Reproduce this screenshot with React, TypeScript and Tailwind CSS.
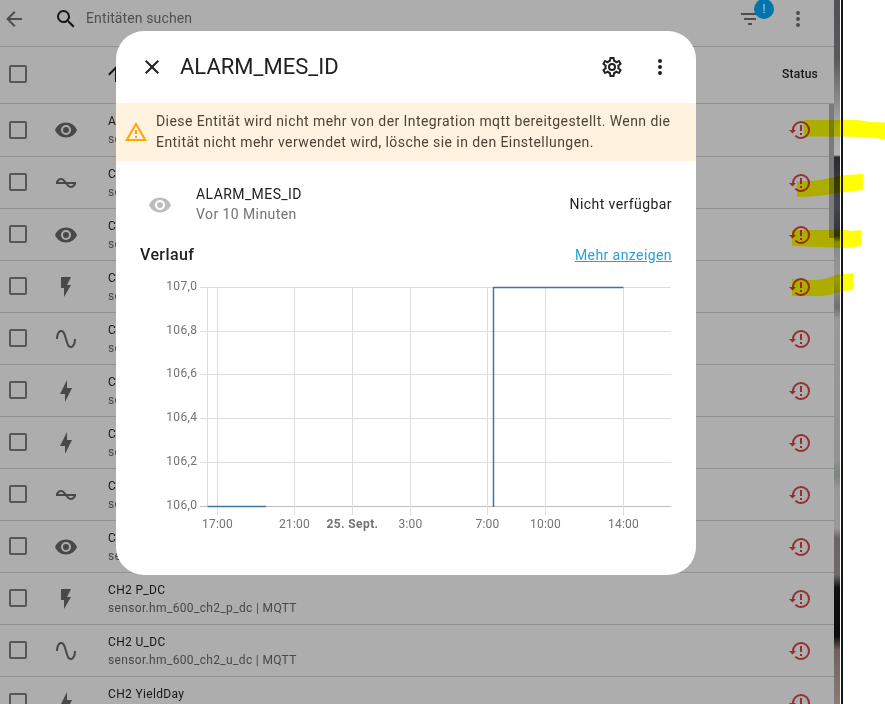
const icons = {
  arrowLeft: 'M20,11V13H8L13.5,18.5L12.08,19.92L4.16,12L12.08,4.08L13.5,5.5L8,11H20Z',
  arrowUp: 'M13,20H11V8L5.5,13.5L4.08,12.08L12,4.16L19.92,12.08L18.5,13.5L13,8V20Z',
  magnify:
    'M9.5,3A6.5,6.5 0 0,1 16,9.5C16,11.11 15.41,12.59 14.44,13.73L14.71,14H15.5L20.5,19L19,20.5L14,15.5V14.71L13.73,14.44C12.59,15.41 11.11,16 9.5,16A6.5,6.5 0 0,1 3,9.5A6.5,6.5 0 0,1 9.5,3M9.5,5C7,5 5,7 5,9.5C5,12 7,14 9.5,14C12,14 14,12 14,9.5C14,7 12,5 9.5,5Z',
  eye: 'M12,9A3,3 0 0,0 9,12A3,3 0 0,0 12,15A3,3 0 0,0 15,12A3,3 0 0,0 12,9M12,17A5,5 0 0,1 7,12A5,5 0 0,1 12,7A5,5 0 0,1 17,12A5,5 0 0,1 12,17M12,4.5C7,4.5 2.73,7.61 1,12C2.73,16.39 7,19.5 12,19.5C17,19.5 21.27,16.39 23,12C21.27,7.61 17,4.5 12,4.5Z',
  flash: 'M7,2V13H10V22L17,10H13L17,2H7Z',
  bolt: 'M11 15H6L13 1V9H18L11 23V15Z',
  sine: 'M16.5,21C13.5,21 12.31,16.76 11.05,12.28C10.14,9.04 9,5 7.5,5C4.11,5 4,11.93 4,12H2C2,11.63 2.06,3 7.5,3C10.5,3 11.71,7.25 12.97,11.74C13.83,14.8 15,19 16.5,19C19.94,19 20.03,12.07 20.03,12H22.03C22.03,12.37 21.97,21 16.5,21Z',
  currentAc:
    'M12.43 11C12.28 10.84 10 7 7 7S2.32 10.18 2 11V13H11.57C11.72 13.16 14 17 17 17S21.68 13.82 22 13V11H12.43M7 9C8.17 9 9.18 9.85 10 11H4.31C4.78 10.17 5.54 9 7 9M17 15C15.83 15 14.82 14.15 14 13H19.69C19.22 13.83 18.46 15 17 15Z',
  restoreAlert:
    'M13,3A9,9 0 0,0 4,12H1L4.5,15.5L8,12H6A7,7 0 0,1 13,5A7,7 0 0,1 20,12A7,7 0 0,1 13,19C11.07,19 9.32,18.21 8.06,16.94L6.64,18.36C8.27,20 10.5,21 13,21A9,9 0 0,0 22,12A9,9 0 0,0 13,3M12,7V13H14V7H12M12,15V17H14V15H12Z',
  filter: 'M6,13H18V11H6M3,6V8H21V6M10,18H14V16H10V18Z',
  dots: 'M12,16A2,2 0 0,1 14,18A2,2 0 0,1 12,20A2,2 0 0,1 10,18A2,2 0 0,1 12,16M12,10A2,2 0 0,1 14,12A2,2 0 0,1 12,14A2,2 0 0,1 10,12A2,2 0 0,1 12,10M12,4A2,2 0 0,1 14,6A2,2 0 0,1 12,8A2,2 0 0,1 10,6A2,2 0 0,1 12,4Z',
  close:
    'M19,6.41L17.59,5L12,10.59L6.41,5L5,6.41L10.59,12L5,17.59L6.41,19L12,13.41L17.59,19L19,17.59L13.41,12L19,6.41Z',
  cog: 'M12,8A4,4 0 0,1 16,12A4,4 0 0,1 12,16A4,4 0 0,1 8,12A4,4 0 0,1 12,8M12,10A2,2 0 0,0 10,12A2,2 0 0,0 12,14A2,2 0 0,0 14,12A2,2 0 0,0 12,10M10,22C9.75,22 9.54,21.82 9.5,21.58L9.13,18.93C8.5,18.68 7.96,18.34 7.44,17.94L4.95,18.95C4.73,19.03 4.46,18.95 4.34,18.73L2.34,15.27C2.21,15.05 2.27,14.78 2.46,14.63L4.57,12.97L4.5,12L4.57,11L2.46,9.37C2.27,9.22 2.21,8.95 2.34,8.73L4.34,5.27C4.46,5.05 4.73,4.96 4.95,5.05L7.44,6.05C7.96,5.66 8.5,5.32 9.13,5.07L9.5,2.42C9.54,2.18 9.75,2 10,2H14C14.25,2 14.46,2.18 14.5,2.42L14.87,5.07C15.5,5.32 16.04,5.66 16.56,6.05L19.05,5.05C19.27,4.96 19.54,5.05 19.66,5.27L21.66,8.73C21.79,8.95 21.73,9.22 21.54,9.37L19.43,11L19.5,12L19.43,13L21.54,14.63C21.73,14.78 21.79,15.05 21.66,15.27L19.66,18.73C19.54,18.95 19.27,19.04 19.05,18.95L16.56,17.95C16.04,18.34 15.5,18.68 14.87,18.93L14.5,21.58C14.46,21.82 14.25,22 14,22H10M11.25,4L10.88,6.61C9.68,6.86 8.62,7.5 7.85,8.39L5.44,7.35L4.69,8.65L6.8,10.2C6.4,11.37 6.4,12.64 6.8,13.8L4.68,15.36L5.43,16.66L7.86,15.62C8.63,16.5 9.68,17.14 10.87,17.38L11.24,20H12.76L13.13,17.39C14.32,17.14 15.37,16.5 16.14,15.62L18.57,16.66L19.32,15.36L17.2,13.81C17.6,12.64 17.6,11.37 17.2,10.2L19.31,8.65L18.56,7.35L16.15,8.39C15.38,7.5 14.32,6.86 13.12,6.62L12.75,4H11.25Z',
  alert: 'M12,2L1,21H23M12,6L19.53,19H4.47M11,10V14H13V10M11,16V18H13V16',
};

type IconName = keyof typeof icons;

function Icon({ name, className = '' }: { name: IconName; className?: string }) {
  return (
    <svg viewBox="0 0 24 24" fill="currentColor" className={`size-6 shrink-0 ${className}`}>
      <path d={icons[name]} />
    </svg>
  );
}

const rows: { icon: IconName; name: string; id: string }[] = [
  { icon: 'eye', name: 'ALARM_MES_ID', id: 'sensor.hm_600_alarm_mes_id' },
  { icon: 'currentAc', name: 'CH0 I_AC', id: 'sensor.hm_600_ch0_i_ac' },
  { icon: 'eye', name: 'CH0 PF_AC', id: 'sensor.hm_600_ch0_pf_ac' },
  { icon: 'flash', name: 'CH0 P_AC', id: 'sensor.hm_600_ch0_p_ac' },
  { icon: 'sine', name: 'CH0 U_AC', id: 'sensor.hm_600_ch0_u_ac' },
  { icon: 'bolt', name: 'CH1 YieldDay', id: 'sensor.hm_600_ch1_yieldday' },
  { icon: 'bolt', name: 'CH1 YieldTotal', id: 'sensor.hm_600_ch1_yieldtotal' },
  { icon: 'currentAc', name: 'CH2 I_DC', id: 'sensor.hm_600_ch2_i_dc' },
  { icon: 'eye', name: 'CH2 Irradiation', id: 'sensor.hm_600_ch2_irradiation' },
  { icon: 'flash', name: 'CH2 P_DC', id: 'sensor.hm_600_ch2_p_dc' },
  { icon: 'sine', name: 'CH2 U_DC', id: 'sensor.hm_600_ch2_u_dc' },
  { icon: 'bolt', name: 'CH2 YieldDay', id: 'sensor.hm_600_ch2_yieldday' },
];

function Checkbox({ className = '' }: { className?: string }) {
  return <span className={`ml-[9px] size-[18px] shrink-0 rounded-[2px] border-2 border-[#565656] ${className}`} />;
}

function EntityTable() {
  return (
    <div className="h-[704px] w-[834px] shrink-0 overflow-hidden bg-[#adadad] text-[#161616]">
      <div className="flex h-[47px] items-center border-b border-[#929292] pb-[9px]">
        <Icon name="arrowLeft" className="ml-0.5 text-[#4d4d4d]" />
        <Icon name="magnify" className="ml-7" />
        <span className="mb-0.5 ml-2 grow text-sm tracking-[0.12px] text-[#505050]">Entitäten suchen</span>
        <span className="relative">
          <Icon name="filter" className="text-[#4d4d4d]" />
          <span className="absolute -top-[8px] left-[16px] flex size-5 items-center justify-center rounded-full bg-[#0274ad] text-xs text-[#b5cfdc]">
            !
          </span>
        </span>
        <Icon name="dots" className="mr-6 ml-6 text-[#4d4d4d]" />
      </div>
      <div className="flex h-[57px] items-center border-b border-[#929292] pb-0.5">
        <Checkbox />
        <Icon name="arrowUp" className="ml-[77px]" />
        <span className="mr-4 ml-auto text-xs font-medium tracking-[0.25px]">Status</span>
      </div>
      <div className="divide-y divide-[#929292]">
        {rows.map((row, i) => (
          <div key={row.name} className={`flex items-center ${i === 0 ? 'h-[53px]' : 'h-[52px]'}`}>
            <Checkbox className={i === 0 ? '' : 'mb-0.5'} />
            <Icon name={row.icon} className="ml-[27px] text-[#484848]" />
            <div className="ml-[30px] grow text-xs leading-[18px] tracking-[0.34px]">
              <div>{row.name}</div>
              <div className="text-[#484848]">{row.id} | MQTT</div>
            </div>
            <Icon name="restoreAlert" className="mr-[22px] text-[#952f2f]" />
          </div>
        ))}
      </div>
    </div>
  );
}

const yTicks = [
  { y: 287, label: '107,0' },
  { y: 331, label: '106,8' },
  { y: 374, label: '106,6' },
  { y: 418, label: '106,4' },
  { y: 462, label: '106,2' },
  { y: 506, label: '106,0' },
];

const xTicks = [
  { x: 217, label: '17:00' },
  { x: 294, label: '21:00' },
  { x: 352, label: '25. Sept.', bold: true },
  { x: 410, label: '3:00' },
  { x: 487, label: '7:00' },
  { x: 545, label: '10:00' },
  { x: 623, label: '14:00' },
];

function HistoryChart() {
  return (
    <svg viewBox="140 275 532 265" className="mt-[10px] ml-6 h-[265px] w-[532px] text-xs" fill="#727272">
      {yTicks.map((t) => (
        <g key={t.label}>
          <rect x={200} y={t.y} width={471} height={1} fill={t.y === 506 ? '#bdbdbd' : '#dedede'} />
          <text x={197.5} y={t.y + 3} textAnchor="end" className="tracking-[0.4px]">
            {t.label}
          </text>
        </g>
      ))}
      <rect x={207} y={287} width={1} height={220} fill="#dedede" />
      {xTicks.map((t) => (
        <g key={t.label}>
          <rect x={t.x} y={287} width={1} height={228} fill="#dedede" />
          <text
            x={t.x + 0.5}
            y={528}
            textAnchor="middle"
            fontWeight={t.bold ? 700 : 400}
            className={t.bold ? 'tracking-[0.4px]' : 'tracking-[0.2px]'}
          >
            {t.label}
          </text>
        </g>
      ))}
      <path d="M207.5 506.5H266M493.5 507V287.5H623.5" fill="none" stroke="#44739e" strokeWidth={1.5} />
    </svg>
  );
}

function MoreInfoDialog() {
  return (
    <div className="absolute top-[31px] left-[116px] h-[544px] w-[580px] overflow-hidden rounded-[28px] bg-white text-[#212121]">
      <div className="flex h-[72px] items-center px-6">
        <Icon name="close" />
        <h1 className="ml-4 grow text-[22px] leading-7">ALARM_MES_ID</h1>
        <Icon name="cog" />
        <Icon name="dots" className="ml-6" />
      </div>
      <div className="flex h-[58px] items-center bg-[#fff3e0] pl-2">
        <Icon name="alert" className="text-[#ffa600]" />
        <p className="ml-2 text-sm leading-[21px] tracking-[0.43px] whitespace-nowrap text-[#4c4334]">
          Diese Entität wird nicht mehr von der Integration mqtt bereitgestellt. Wenn die
          <br />
          Entität nicht mehr verwendet wird, lösche sie in den Einstellungen.
        </p>
      </div>
      <div className="mt-6 flex h-10 items-center pr-6 pl-8 text-sm leading-5 tracking-[0.42px]">
        <Icon name="eye" className="text-[#bdbdbd]" />
        <div className="mb-0.5 ml-6 grow">
          <div>ALARM_MES_ID</div>
          <div className="text-[#727272]">Vor 10 Minuten</div>
        </div>
        <div className="mb-0.5">Nicht verfügbar</div>
      </div>
      <div className="mt-4 flex h-6 items-center justify-between px-6 pt-1">
        <h2 className="text-base font-medium tracking-[0.4px]">Verlauf</h2>
        <a href="#" className="text-sm tracking-[0.42px] text-[#2a9fdc] underline">
          Mehr anzeigen
        </a>
      </div>
      <HistoryChart />
    </div>
  );
}

// Yellow marker strokes drawn over the status icons
function MarkerStrokes() {
  return (
    <svg viewBox="0 0 885 704" className="pointer-events-none absolute top-0 left-0 h-[704px] w-[885px] mix-blend-multiply" fill="#ffff00">
      <path d="M804 120H858L870 122L885 122.500V139L862 137L840 136.500H804Z" />
      <path d="M797 181Q810 182 825 179L845 175L863 174V190L845 192L825 195Q812 197 797 197Z" />
      <path d="M792 230H846L852 231L861 230V246L846 248L820 247L792 246Z" />
      <path d="M792 279L810 280Q825 280 836 275L853 273V290L842 291Q828 297 813 296L792 296Z" />
    </svg>
  );
}

export default function App() {
  return (
    <div className="relative flex h-[704px] w-[885px] overflow-hidden bg-white font-[Roboto,sans-serif]">
      <EntityTable />
      <div className="w-1.5 shrink-0 bg-[linear-gradient(to_bottom,#505154_0px,#5a5b5e_60px,#a8a8a8_125px,#b4b4b4_155px,#2a2b2f_157px,#44474e_205px,#303136_236px,#88898b_242px,#999_280px,#707070_307px,#999_320px,#929292_460px,#7c857d_475px,#999_490px,#999_528px,#6b6465_538px,#716968_575px,#101010_588px,#0b0b0b_636px,#6f625f_650px,#8b7b75_704px)]" />
      <div className="ml-px w-0.5 shrink-0 bg-[#151515]" />
      {/* Scrollbar thumb, runs on over the dark part of the strip */}
      <div className="absolute top-[104px] left-[829px] h-[134px] w-[5px] bg-[#7b7b7b]" />
      <MoreInfoDialog />
      <MarkerStrokes />
    </div>
  );
}
